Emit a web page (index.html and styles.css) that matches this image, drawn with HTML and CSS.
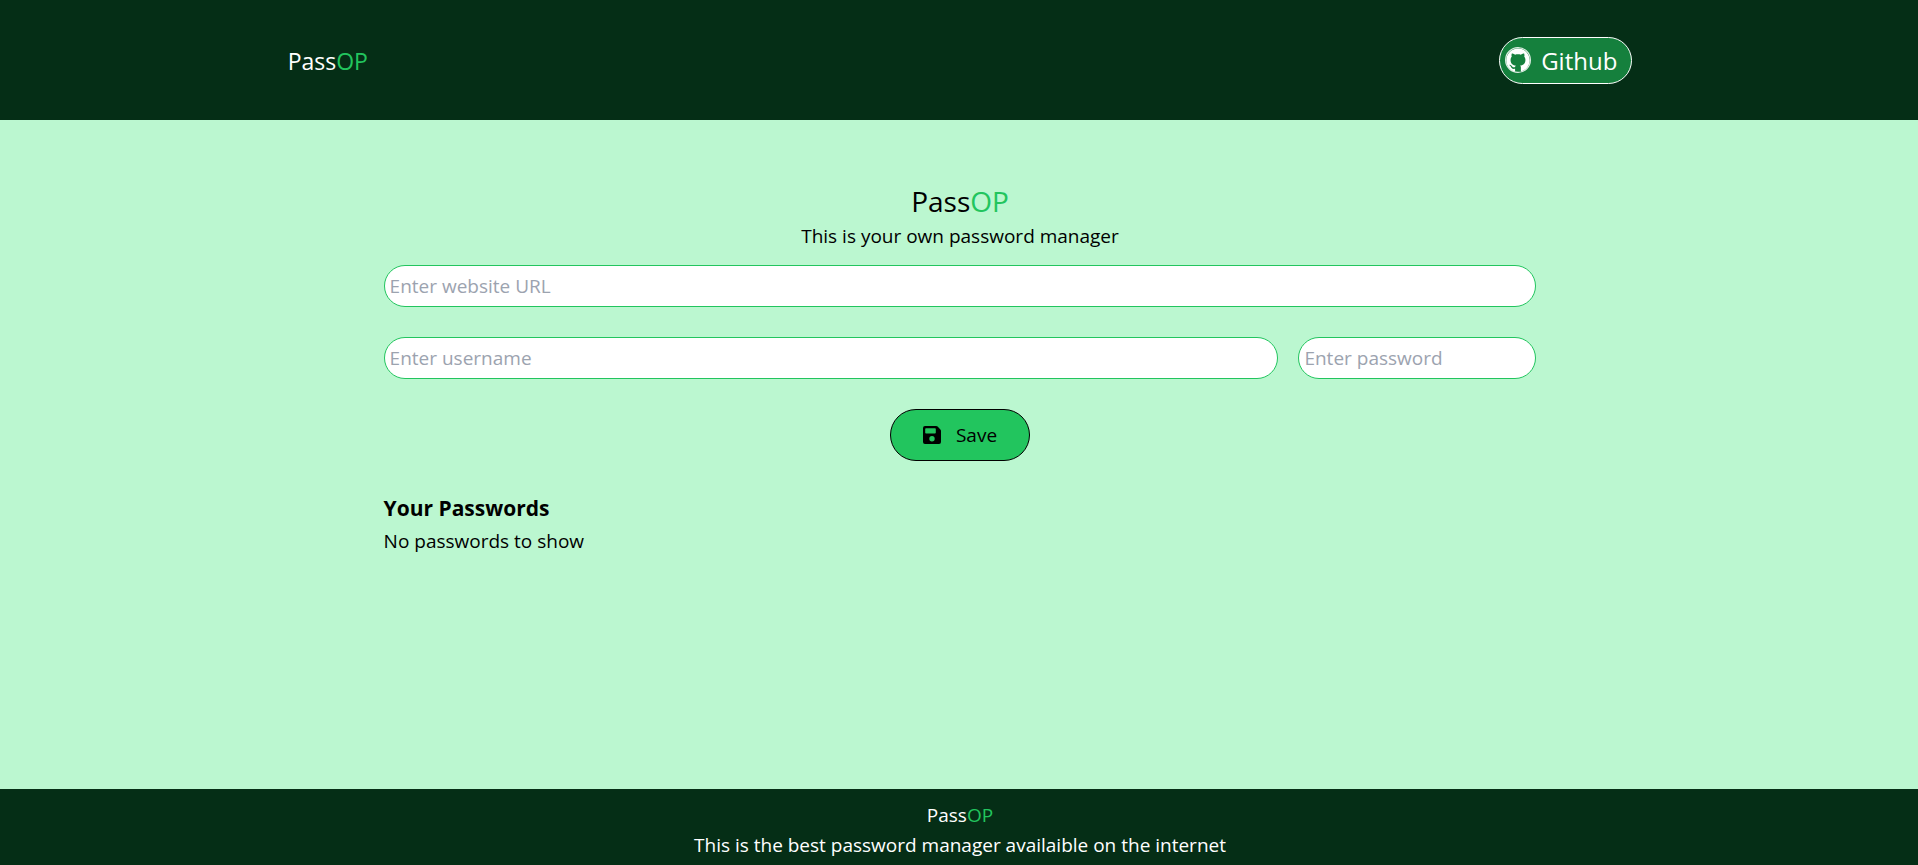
FILE: index.html
```html
<!DOCTYPE html>
<html lang="en">
<head>
<meta charset="utf-8">
<meta name="viewport" content="width=device-width, initial-scale=1">
<title>PassOP</title>
<link rel="stylesheet" href="styles.css">
</head>
<body>
<header class="navbar">
  <div class="brand">Pass<span class="accent">OP</span></div>
  <button class="github" type="button">
    <svg class="github-icon" viewBox="0 0 26 26" aria-hidden="true">
      <circle cx="13" cy="13" r="12.4" fill="none" stroke="#fff" stroke-opacity=".85" stroke-width="1.200"/>
      <path transform="translate(1.3 1.3) scale(.975)" fill="#fff" d="M12 .297c-6.63 0-12 5.373-12 12 0 5.303 3.438 9.8 8.205 11.385.6.113.82-.258.82-.577 0-.285-.01-1.04-.015-2.04-3.338.724-4.042-1.61-4.042-1.61C4.422 18.07 3.633 17.7 3.633 17.7c-1.087-.744.084-.729.084-.729 1.205.084 1.838 1.236 1.838 1.236 1.07 1.835 2.809 1.305 3.495.998.108-.776.417-1.305.76-1.605-2.665-.3-5.466-1.332-5.466-5.93 0-1.31.465-2.38 1.235-3.22-.135-.303-.54-1.523.105-3.176 0 0 1.005-.322 3.3 1.23.96-.267 1.98-.399 3-.405 1.02.006 2.04.138 3 .405 2.28-1.552 3.285-1.23 3.285-1.23.645 1.653.24 2.873.12 3.176.765.84 1.23 1.91 1.23 3.22 0 4.61-2.805 5.625-5.475 5.92.42.36.81 1.096.81 2.22 0 1.606-.015 2.896-.015 3.286 0 .315.21.69.825.57C20.565 22.092 24 17.592 24 12.297c0-6.627-5.373-12-12-12"/>
    </svg>
    <span>Github</span>
  </button>
</header>
<main class="manager">
  <h1 class="title">Pass<span class="accent">OP</span></h1>
  <p class="subtitle">This is your own password manager</p>
  <form class="entry">
    <input class="field" type="text" placeholder="Enter website URL" aria-label="Website URL">
    <div class="row">
      <input class="field" type="text" placeholder="Enter username" aria-label="Username">
      <input class="field field-password" type="password" placeholder="Enter password" aria-label="Password">
    </div>
    <button class="save" type="button">
      <svg class="save-icon" viewBox="0 0 18 18" aria-hidden="true">
        <path fill="#000" fill-rule="evenodd" d="M2 0h11.2c.5 0 1 .2 1.400.6l2.800 2.800c.4.4.6.9.6 1.400V16a2 2 0 0 1-2 2H2a2 2 0 0 1-2-2V2a2 2 0 0 1 2-2zM3 2.200a.8.8 0 0 0-.8.8v3.700c0 .4.4.8.8.8h9c.4 0 .8-.4.8-.8V3a.8.8 0 0 0-.8-.8zM9 10a2.700 2.700 0 1 0 0 5.400A2.700 2.700 0 0 0 9 10z"/>
      </svg>
      <span>Save</span>
    </button>
  </form>
  <h2 class="list-title">Your Passwords</h2>
  <p class="empty">No passwords to show</p>
</main>
<footer class="footer">
  <div>Pass<span class="accent">OP</span></div>
  <p class="tagline">This is the best password manager availaible on the internet</p>
</footer>
</body>
</html>
```
FILE: styles.css
```css
* {
  box-sizing: border-box;
}

body {
  margin: 0;
  min-height: 100vh;
  display: flex;
  flex-direction: column;
  background: #bbf7d0;
  color: #000;
  font-family: "Open Sans", "Noto Sans", sans-serif;
  font-size: 19px;
  line-height: 30px;
}

h1, h2, p {
  margin: 0;
}

button, input {
  font: inherit;
}

.accent {
  color: #22c55e;
}

.navbar {
  display: flex;
  justify-content: space-between;
  align-items: center;
  height: 120px;
  padding: 0 calc(15% - 2px) 0 15%;
  background: #052e16;
  color: #fff;
  font-size: 24px;
}

.brand {
  padding-top: 2px;
  font-size: 23px;
}

.github {
  display: flex;
  align-items: center;
  gap: 10px;
  padding: 5px 14px 5px 5px;
  border: 1px solid #fff;
  border-radius: 999px;
  background: #15803d;
  color: #fff;
  line-height: 35px;
}

.github-icon {
  width: 26px;
  height: 26px;
}

.manager {
  flex: 1;
  padding: 61px calc(20% - 2px) 0 20%;
}

.title {
  font-size: 28px;
  font-weight: 400;
  line-height: 40px;
  text-align: center;
}

.subtitle {
  text-align: center;
}

.entry {
  display: flex;
  flex-direction: column;
  gap: 30px;
  margin-top: 14px;
}

.row {
  display: flex;
  gap: 20px;
}

.field {
  width: 100%;
  min-width: 0;
  height: 42px;
  padding: 5px;
  border: 1px solid #22c55e;
  border-radius: 999px;
  background: #fff;
  color: #000;
}

.field::placeholder {
  color: #9ca3af;
  opacity: 1;
}

.field-password {
  flex: none;
  width: 238px;
}

.save {
  align-self: center;
  display: flex;
  align-items: center;
  gap: 15px;
  padding: 10px 32px;
  border: 1px solid #000;
  border-radius: 999px;
  background: #22c55e;
  color: #000;
}

.save-icon {
  width: 18px;
  height: 18px;
}

.list-title {
  margin-top: 30px;
  font-size: 21px;
  font-weight: 700;
  line-height: 35px;
}

.footer {
  padding: 11px 0 5px 2px;
  background: #052e16;
  color: #fff;
  text-align: center;
}
```
